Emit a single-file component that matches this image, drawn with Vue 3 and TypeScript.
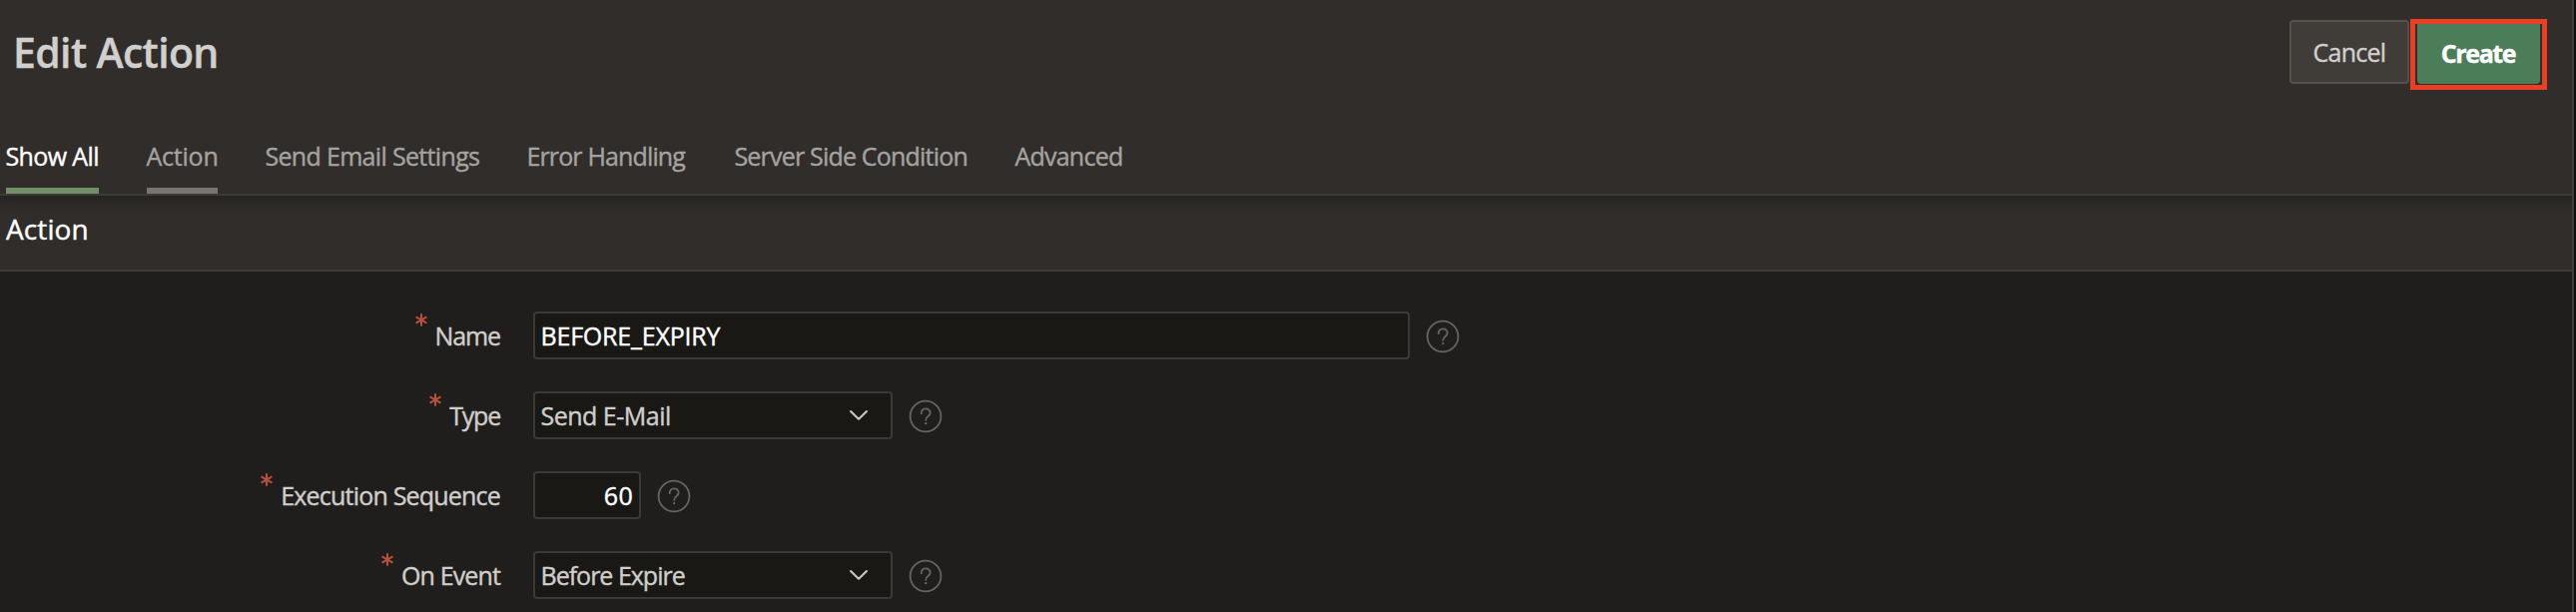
<script setup lang="ts">
interface Tab {
  id: string
  label: string
  state?: 'active' | 'hover'
}

interface Field {
  id: string
  label: string
  value: string
  kind: 'text' | 'select' | 'number'
}

const tabs: Tab[] = [
  { id: 'all', label: 'Show All', state: 'active' },
  { id: 'action', label: 'Action', state: 'hover' },
  { id: 'email', label: 'Send Email Settings' },
  { id: 'error', label: 'Error Handling' },
  { id: 'condition', label: 'Server Side Condition' },
  { id: 'advanced', label: 'Advanced' },
]

const fields: Field[] = [
  { id: 'name', label: 'Name', value: 'BEFORE_EXPIRY', kind: 'text' },
  { id: 'type', label: 'Type', value: 'Send E-Mail', kind: 'select' },
  { id: 'sequence', label: 'Execution Sequence', value: '60', kind: 'number' },
  { id: 'event', label: 'On Event', value: 'Before Expire', kind: 'select' },
]
</script>

<template>
  <main class="page">
    <header class="header">
      <div class="title-row">
        <h1 class="title">Edit Action</h1>
        <div class="actions">
          <button class="btn btn-cancel" type="button">Cancel</button>
          <div class="highlight">
            <button class="btn btn-create" type="button">Create</button>
          </div>
        </div>
      </div>
      <nav class="tabs">
        <a v-for="tab in tabs" :key="tab.id" class="tab" :class="[`tab-${tab.id}`, tab.state]">{{ tab.label }}</a>
      </nav>
    </header>

    <section class="region">
      <h2 class="region-title">Action</h2>
      <div class="form">
        <div v-for="field in fields" :key="field.id" class="row" :class="`row-${field.id}`">
          <div class="label-cell">
            <svg class="required" viewBox="0 0 12 13" fill="none" stroke="#b9503b" stroke-width="2">
              <path d="M6 .3v12.4M.6 3.4l10.8 6.2M11.4 3.4L.6 9.6" />
            </svg>
            <span class="label">{{ field.label }}</span>
          </div>
          <div class="control" :class="field.kind">
            <span class="value">{{ field.value }}</span>
            <svg v-if="field.kind === 'select'" class="chevron" viewBox="0 0 20 12" fill="none" stroke="#c9c7c5" stroke-width="2.1" stroke-linecap="round" stroke-linejoin="round">
              <path d="M2 2l8 7.8L18 2" />
            </svg>
          </div>
          <svg class="help" viewBox="0 0 34 34" fill="none" stroke="#666462" stroke-width="1.8">
            <circle cx="17" cy="17" r="15.4" />
            <path d="M12.7 14.2C12.7 8 21.7 8 21.7 13.6C21.7 17 17.2 17 17.2 20.8" stroke-linecap="round" />
            <circle cx="17.2" cy="24.1" r="1.2" fill="#666462" stroke="none" />
          </svg>
        </div>
      </div>
    </section>
  </main>
</template>

<style>
body {
  margin: 0;
  background: #0e0d0c;
}
</style>

<style scoped>
.page {
  box-sizing: border-box;
  width: 2578px;
  height: 613px;
  overflow: hidden;
  border-right: 2px solid #403d3a;
  background: #201e1c;
  font-family: "Open Sans", "Noto Sans", sans-serif;
  font-size: 25px;
  color: #d0cecb;
  -webkit-text-stroke-width: 0.4px;
}

.header {
  box-sizing: border-box;
  height: 196px;
  background: #312d2a;
  border-bottom: 2px solid #3d3b37;
}

.title-row {
  display: flex;
  justify-content: space-between;
  align-items: flex-start;
  height: 104px;
  margin-bottom: 20px;
  padding: 0 25px 0 13px;
}

.title {
  margin: 0;
  font-size: 41px;
  font-weight: 600;
  line-height: 105px;
  letter-spacing: -0.65px;
  color: #d2d0ce;
}

.actions {
  display: flex;
  align-items: flex-start;
  gap: 1px;
  padding-top: 19px;
}

.btn {
  box-sizing: border-box;
  margin: 0;
  padding: 0;
  font-family: inherit;
  font-size: 25px;
  line-height: 34px;
}

.btn-cancel {
  width: 120px;
  height: 64px;
  margin-top: 1px;
  border: 2px solid #54514d;
  border-radius: 4px;
  background: #403c38;
  color: #d2d0cd;
  letter-spacing: -0.75px;
}

.highlight {
  display: flex;
  justify-content: center;
  box-sizing: border-box;
  width: 137px;
  height: 71px;
  border: 5px solid #ea3f25;
}

.btn-create {
  width: 123px;
  height: 60px;
  padding: 0 1px 3px 0;
  border: 0;
  border-radius: 0 0 4px 4px;
  background: #4b7d58;
  color: #fff;
  font-weight: 700;
  letter-spacing: -1.4px;
}

.tabs {
  display: flex;
  gap: 48px;
  padding-left: 6px;
}

.tab {
  height: 64px;
  line-height: 65px;
  border-bottom: 6px solid transparent;
  color: #a5a3a1;
  text-indent: -0.6px;
  white-space: nowrap;
}

.tab.active {
  color: #fff;
  border-color: #728f68;
}

.tab.hover {
  border-color: #7a7370;
}

.tab-all { width: 93px; letter-spacing: -0.6px; }
.tab-action { width: 71px; letter-spacing: -0.2px; }
.tab-email { width: 214px; letter-spacing: -0.67px; }
.tab-error { width: 160px; letter-spacing: -0.85px; }
.tab-condition { width: 233px; letter-spacing: -0.8px; }
.tab-advanced { width: 108px; letter-spacing: -0.76px; }

.region-title {
  box-sizing: border-box;
  height: 76px;
  margin: 0;
  padding: 0 6px 8px;
  border-bottom: 2px solid #3d3b37;
  background: linear-gradient(#262421, #2b2825 7px, #312d2a 20px);
  color: #fff;
  font-size: 28px;
  font-weight: 500;
  line-height: 67px;
  letter-spacing: 0.1px;
}

.form {
  display: grid;
  row-gap: 32px;
  padding-top: 40px;
}

.row {
  display: flex;
  align-items: center;
  height: 48px;
}

.label-cell {
  display: flex;
  justify-content: flex-end;
  gap: 8px;
  width: 501px;
  height: 48px;
  margin-right: 33px;
}

.required {
  width: 12px;
  height: 13px;
  margin-top: 2px;
}

.label {
  line-height: 49px;
}

.row-name .label { letter-spacing: -1.1px; }
.row-type .label { letter-spacing: -1.2px; }
.row-sequence .label { letter-spacing: -0.8px; }
.row-event .label { letter-spacing: -0.86px; }

.control {
  box-sizing: border-box;
  display: flex;
  align-items: center;
  height: 48px;
  padding: 0 6px 0 5.5px;
  border: 2px solid #3c3a36;
  border-radius: 4px;
  background: #191815;
  line-height: 45px;
  white-space: nowrap;
}

.control.text {
  width: 878px;
  color: #fff;
  font-weight: 500;
  letter-spacing: -0.2px;
}

.control.select {
  justify-content: space-between;
  width: 360px;
  padding-right: 22px;
}

.control.number {
  justify-content: flex-end;
  width: 108px;
  color: #fff;
  font-weight: 500;
  letter-spacing: 0.3px;
}

.row-type .value { letter-spacing: -0.5px; }
.row-event .value { letter-spacing: -1px; }

.chevron {
  width: 20px;
  height: 12px;
}

.help {
  width: 34px;
  height: 34px;
  margin: 1px 0 0 15.5px;
}
</style>
